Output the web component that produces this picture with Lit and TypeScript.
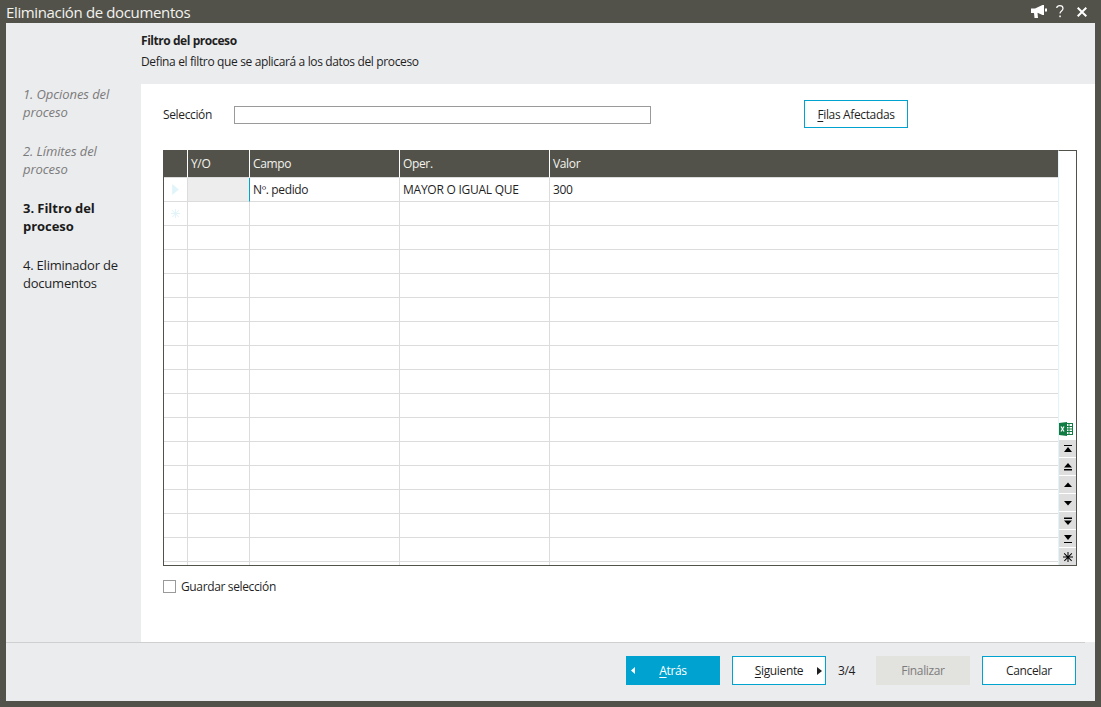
import { LitElement, html, css, svg, unsafeCSS } from "lit";
import { customElement } from "lit/decorators.js";

// one more row than fits, the grid clips it so the column lines reach the bottom
const ROWS = 17;

// glyphs of the grid's navigation strip, drawn on a 10x10 box
const NAV = [
  svg`<path d="M1 1h8v1H1zM5 3l4 5H1z"/>`,
  svg`<path d="M5 1l4 4.500H1zM1 7h8v1.500H1z"/>`,
  svg`<path d="M5 2.500l4 4.500H1z"/>`,
  svg`<path d="M1 3h8L5 7.500z"/>`,
  svg`<path d="M1 1.500h8V3H1zM1 4.500h8L5 9z"/>`,
  svg`<path d="M1 1h8L5 6zM1 8h8v1H1z"/>`,
  svg`<path d="M4.500 0h1v10h-1zM0 4.500h10v1H0zM1.500 1l7.500 7.500-.7.7L.8 1.700zM8.500 1l.7.7-7.500 7.500-.7-.7z"/>`,
];

@customElement("app-root")
export class AppRoot extends LitElement {
  static styles = css`
    :host {
      display: block;
      width: 1101px;
      height: 707px;
      background: #52524a;
      font-family: "Open Sans", "Noto Sans", sans-serif;
      font-size: 12px;
      letter-spacing: -0.36px;
      color: #1f1f1f;
      overflow: hidden;
    }
    .titlebar {
      height: 23px;
      display: flex;
      align-items: center;
      justify-content: space-between;
      padding: 0 14px 0 6px;
      color: #f2f2ee;
      font-size: 15px;
      letter-spacing: -0.36px;
    }
    .title-icons {
      display: flex;
      align-items: center;
    }
    .title-icons svg {
      display: block;
      fill: #fff;
    }
    .title-icons .help {
      margin: 0 13px 0 9px;
    }
    .window {
      margin: 0 6px;
      width: 1089px;
      height: 678px;
      background: #ebecee;
      display: flex;
      flex-direction: column;
    }
    .head {
      height: 61px;
      padding: 9px 0 0 135px;
      box-sizing: border-box;
      line-height: 17px;
    }
    .head b {
      display: block;
      font-weight: 700;
      margin-bottom: 4px;
      letter-spacing: -0.45px;
    }
    .middle {
      flex: 1;
      display: flex;
      min-height: 0;
    }
    .steps {
      width: 135px;
      box-sizing: border-box;
      padding: 2px 14px 0 17px;
      font-size: 13px;
      line-height: 17.500px;
      letter-spacing: -0.22px;
      display: flex;
      flex-direction: column;
      gap: 22px;
    }
    .steps .done {
      color: #7b7b7b;
      font-style: italic;
      letter-spacing: -0.08px;
    }
    .steps .current {
      font-weight: 700;
      color: #1a1a1a;
      letter-spacing: -0.05px;
    }
    .main {
      flex: 1;
      background: #fff;
      padding: 16px 18px 0 22px;
      box-sizing: border-box;
    }
    .selection {
      display: flex;
      align-items: center;
      height: 28px;
    }
    .selection label {
      width: 71px;
    }
    .selection .input {
      width: 415px;
      height: 16px;
      margin-top: 2px;
      border: 1px solid #9a9a9a;
    }
    .btn {
      box-sizing: border-box;
      height: 28px;
      border: 1px solid #00a3d0;
      background: #fff;
      display: flex;
      align-items: center;
      justify-content: center;
      color: #1f1f1f;
    }
    .btn u {
      text-underline-offset: 2px;
    }
    .affected {
      width: 104px;
      margin-left: 153px;
    }
    .grid {
      margin-top: 22px;
      width: 914px;
      height: 416px;
      box-sizing: border-box;
      border: 1px solid #52524a;
      border-top: none;
      display: flex;
      overflow: hidden;
    }
    .table {
      width: 894px;
      flex: none;
      display: grid;
      grid-template-columns: 23px 62px 150px 150px 1fr;
      grid-template-rows: 28px repeat(${unsafeCSS(String(ROWS))}, 24px);
    }
    .th {
      background: #52524a;
      color: #f2f2ee;
      border-left: 1px solid #fff;
      border-bottom: 1px solid #dcdcdc;
      padding: 6px 0 0 3px;
      line-height: 16px;
      box-sizing: border-box;
    }
    .th.first {
      border-left: none;
    }
    .td {
      box-sizing: border-box;
      border-left: 1px solid #dcdcdc;
      border-bottom: 1px solid #dcdcdc;
      padding: 3px 0 0 3px;
      line-height: 18px;
      white-space: nowrap;
    }
    .td.first {
      border-left: none;
      padding: 0;
      display: flex;
      align-items: center;
      justify-content: center;
      fill: #e0f4fa;
    }
    .td.yo {
      background: #ededed;
    }
    .td.active {
      border-left: 1px solid #00a3d0;
    }
    .td.caps {
      letter-spacing: -0.25px;
    }
    .side {
      flex: 1;
      display: flex;
      flex-direction: column;
      align-items: stretch;
      justify-content: flex-end;
      border-left: 1px solid #e0f4fa;
      border-top: 1px solid #52524a;
    }
    .excel {
      display: block;
      margin: 0 0 3px 0;
    }
    .nav {
      height: 17px;
      flex: none;
      margin-top: 1px;
      background: #dedede;
      display: flex;
      align-items: center;
      justify-content: center;
    }
    .nav svg {
      display: block;
      fill: #000;
    }
    .save {
      display: flex;
      align-items: center;
      gap: 5px;
      margin-top: 14px;
      height: 13px;
    }
    .check {
      width: 13px;
      height: 13px;
      box-sizing: border-box;
      border: 1px solid #9a9a9a;
    }
    .rule {
      height: 1px;
      background: #cfcfcf;
      margin-right: 10px;
      flex: none;
    }
    .footer {
      height: 58px;
      flex: none;
      display: flex;
      align-items: flex-start;
      padding: 13px 19px 0 620px;
      box-sizing: border-box;
    }
    .footer .btn {
      width: 94px;
      height: 29px;
    }
    .back {
      background: #00a3d0;
      border-color: #00a3d0;
      color: #fff !important;
      position: relative;
    }
    .next {
      position: relative;
      margin-left: 12px;
    }
    .arrow {
      position: absolute;
      top: 10px;
      fill: currentColor;
    }
    .count {
      width: 50px;
      height: 29px;
      line-height: 29px;
      padding-left: 12px;
      box-sizing: border-box;
    }
    .finish {
      background: #e2e2df !important;
      border-color: #e2e2df !important;
      color: #7c7c7c !important;
    }
    .cancel {
      margin-left: 12px;
    }
  `;

  render() {
    const rows = [];
    for (let r = 0; r < ROWS; r++) {
      let marker = svg``;
      if (r == 0) marker = svg`<svg width="7" height="11" viewBox="0 0 6 10"><path d="M0 0l6 5-6 5z"/></svg>`;
      if (r == 1) marker = svg`<svg width="9" height="9" viewBox="0 0 10 10">${NAV[6]}</svg>`;
      rows.push(html`
        <div class="td first">${marker}</div>
        <div class="td ${r == 0 ? "yo" : ""}"></div>
        <div class="td ${r == 0 ? "active" : ""}">${r == 0 ? "Nº. pedido" : ""}</div>
        <div class="td caps">${r == 0 ? "MAYOR O IGUAL QUE" : ""}</div>
        <div class="td">${r == 0 ? "300" : ""}</div>
      `);
    }

    return html`
      <div class="titlebar">
        <span>Eliminación de documentos</span>
        <div class="title-icons">
          <svg width="16" height="14" viewBox="0 0 16 14"><path d="M0 3.500h4L11.500 0H13v10h-1.500L6.500 7.800 7 13H3.500L3 8H0zM14 3.500h2v3h-2z"/></svg>
          <svg class="help" width="8" height="13" viewBox="0 0 8 13"><path d="M.7 3C1 1.300 2.300.7 3.800.7c1.900 0 3.200 1.100 3.200 2.800 0 2.400-3 2.500-3 5" style="fill:none;stroke:#fff;stroke-width:1.200"/><rect x="3.300" y="10.500" width="1.500" height="1.700"/></svg>
          <svg width="10" height="10" viewBox="0 0 10 10"><path d="M.7.7l8.600 8.600M9.300.7L.7 9.300" style="fill:none;stroke:#fff;stroke-width:2"/></svg>
        </div>
      </div>
      <div class="window">
        <div class="head">
          <b>Filtro del proceso</b>
          Defina el filtro que se aplicará a los datos del proceso
        </div>
        <div class="middle">
          <div class="steps">
            <div class="done">1. Opciones del proceso</div>
            <div class="done">2. Límites del proceso</div>
            <div class="current">3. Filtro del proceso</div>
            <div>4. Eliminador de documentos</div>
          </div>
          <div class="main">
            <div class="selection">
              <label>Selección</label>
              <div class="input"></div>
              <div class="btn affected"><span><u>F</u>ilas Afectadas</span></div>
            </div>
            <div class="grid">
              <div class="table">
                <div class="th first"></div>
                <div class="th">Y/O</div>
                <div class="th">Campo</div>
                <div class="th">Oper.</div>
                <div class="th">Valor</div>
                ${rows}
              </div>
              <div class="side">
                <svg class="excel" width="14" height="14" viewBox="0 0 14 14">
                  <rect x="6.500" y="1.500" width="7" height="11" fill="#fff" stroke="#107c41"/>
                  <path d="M7 4.500h6M7 7h6M7 9.500h6M10 2v10" stroke="#107c41" fill="none"/>
                  <path d="M0 1l8-1v14l-8-1z" fill="#107c41"/>
                  <path d="M2 4.500l3 5M5 4.500l-3 5" stroke="#fff" stroke-width="1.200" fill="none"/>
                </svg>
                ${NAV.map(
                  (g) => html`<div class="nav"><svg width="10" height="10" viewBox="0 0 10 10">${g}</svg></div>`
                )}
              </div>
            </div>
            <div class="save">
              <div class="check"></div>
              <span>Guardar selección</span>
            </div>
          </div>
        </div>
        <div class="rule"></div>
        <div class="footer">
          <div class="btn back">
            <svg class="arrow" style="left:4px" width="4" height="7" viewBox="0 0 4 7"><path d="M4 0v7L0 3.500z"/></svg>
            <span><u>A</u>trás</span>
          </div>
          <div class="btn next">
            <span><u>S</u>iguiente</span>
            <svg class="arrow" style="right:3px" width="5" height="8" viewBox="0 0 5 8"><path d="M0 0v8l5-4z"/></svg>
          </div>
          <div class="count">3/4</div>
          <div class="btn finish"><span>Finalizar</span></div>
          <div class="btn cancel"><span>Cancelar</span></div>
        </div>
      </div>
    `;
  }
}
